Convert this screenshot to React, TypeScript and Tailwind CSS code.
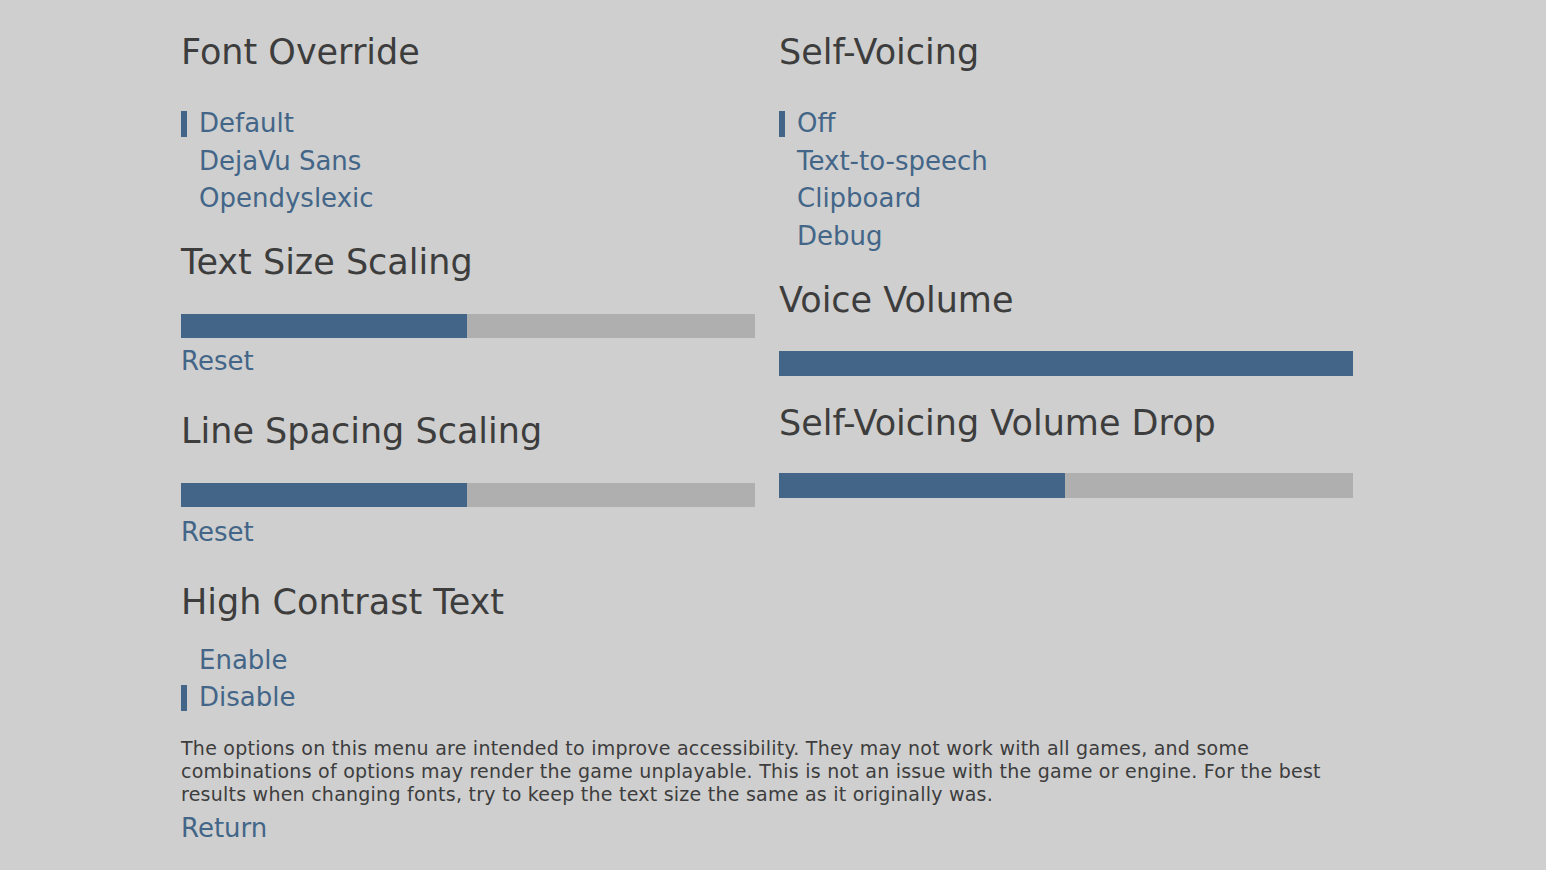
import React from "react";

const Heading = ({ children, className = "" }: { children: React.ReactNode; className?: string }) => (
  <div className={`h-[40px] leading-[40px] text-[35px] text-[#3d3d3d] whitespace-nowrap ${className}`}>{children}</div>
);

const Option = ({ label, selected = false }: { label: string; selected?: boolean }) => (
  <div className="flex items-center h-[37.5px] text-[26px] text-[#436688] cursor-pointer">
    <span className={`w-[6px] h-[26px] ${selected ? "bg-[#436688]" : ""}`} />
    <span className="ml-[12px] leading-[37.5px] whitespace-nowrap">{label}</span>
  </div>
);

const Slider = ({ value, className = "" }: { value: number; className?: string }) => (
  <div className={`w-full bg-[#afafaf] ${className}`}>
    <div className="h-full bg-[#436688]" style={{ width: `${value}%` }} />
  </div>
);

const TextButton = ({ children, className = "" }: { children: React.ReactNode; className?: string }) => (
  <div className={`h-[37.5px] leading-[37.5px] text-[26px] text-[#436688] cursor-pointer ${className}`}>{children}</div>
);

export default function App() {
  return (
    <div className="min-h-screen bg-[#cfcfcf] font-['DejaVu_Sans',sans-serif]">
      <div className="w-[1172px] ml-[181px] pt-[32px]">
        <div className="flex gap-[24px]">
          {/* left column */}
          <div className="w-[574px]">
            <Heading>Font Override</Heading>
            <div className="mt-[33px]">
              <Option label="Default" selected />
              <Option label="DejaVu Sans" />
              <Option label="Opendyslexic" />
            </div>

            <Heading className="mt-[24px]">Text Size Scaling</Heading>
            <Slider value={49.8} className="mt-[32px] h-[24px]" />
            <TextButton className="mt-[5px]">Reset</TextButton>

            <Heading className="mt-[31px]">Line Spacing Scaling</Heading>
            <Slider value={49.8} className="mt-[32px] h-[24px]" />
            <TextButton className="mt-[6.5px]">Reset</TextButton>

            <Heading className="mt-[31px]">High Contrast Text</Heading>
            <div className="mt-[19.5px]">
              <Option label="Enable" />
              <Option label="Disable" selected />
            </div>
          </div>

          {/* right column */}
          <div className="w-[574px]">
            <Heading>Self-Voicing</Heading>
            <div className="mt-[33px]">
              <Option label="Off" selected />
              <Option label="Text-to-speech" />
              <Option label="Clipboard" />
              <Option label="Debug" />
            </div>

            <Heading className="mt-[25px]">Voice Volume</Heading>
            <Slider value={100} className="mt-[31px] h-[25px]" />

            <Heading className="mt-[27px]">Self-Voicing Volume Drop</Heading>
            <Slider value={49.8} className="mt-[30px] h-[25px]" />
          </div>
        </div>

        <p className="mt-[20.5px] text-[19px] tracking-[0.24px] leading-[23px] text-[#3d3d3d]">
          The options on this menu are intended to improve accessibility. They may not work with all games, and some
          combinations of options may render the game unplayable. This is not an issue with the game or engine. For the
          best results when changing fonts, try to keep the text size the same as it originally was.
        </p>
        <TextButton className="mt-[4px]">Return</TextButton>
      </div>
    </div>
  );
}
